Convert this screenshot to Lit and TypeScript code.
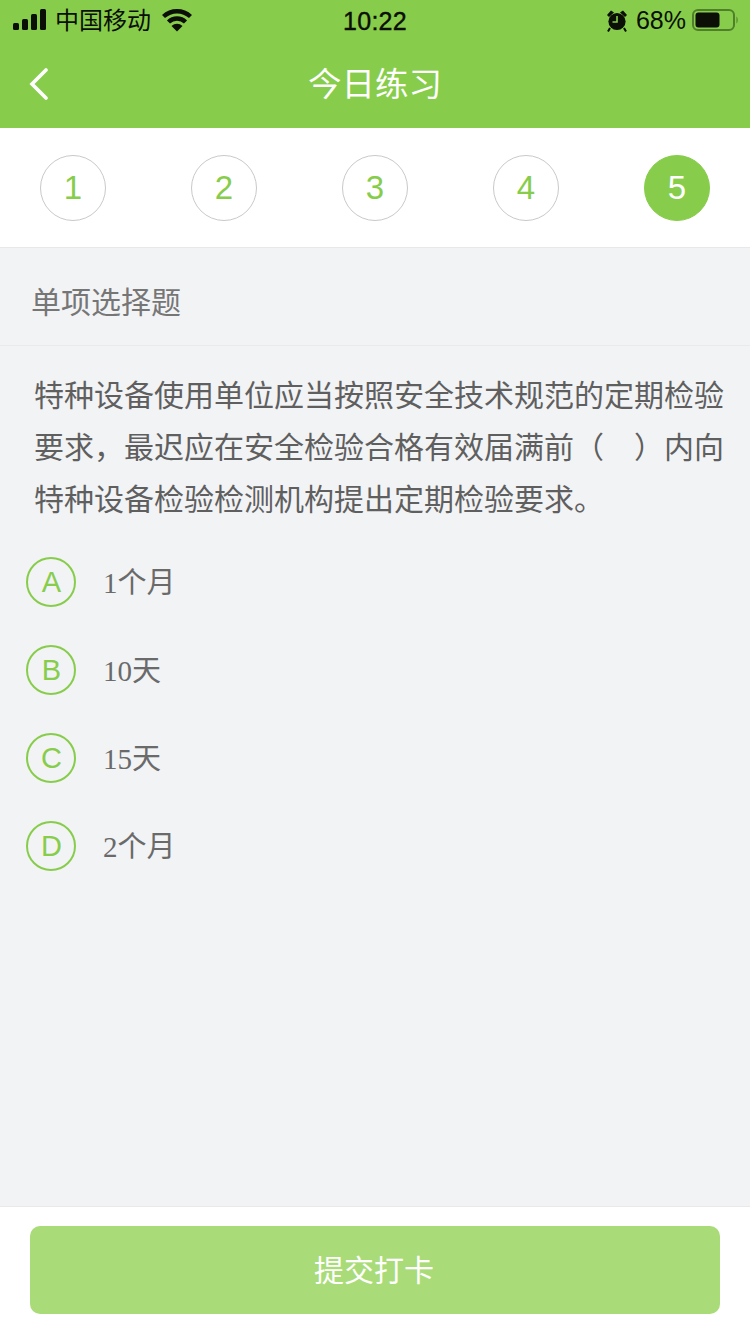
import { LitElement, html, css, svg } from 'lit';
import { customElement, state } from 'lit/decorators.js';

@customElement('app-root')
export class AppRoot extends LitElement {
  @state() private steps = [1, 2, 3, 4, 5];
  @state() private current = 5;
  @state() private options = [
    { key: 'A', text: '1个月' },
    { key: 'B', text: '10天' },
    { key: 'C', text: '15天' },
    { key: 'D', text: '2个月' },
  ];

  static styles = css`
    :host {
      display: flex;
      flex-direction: column;
      width: 750px;
      height: 1334px;
      background: #f2f3f5;
      font-family: "Liberation Sans", "Noto Sans CJK SC", sans-serif;
      overflow: hidden;
    }

    .head {
      background: #87cd4b;
      height: 128px;
      flex: none;
    }

    .status {
      height: 40px;
      display: grid;
      grid-template-columns: 1fr auto 1fr;
      align-items: center;
      color: #0b0f05;
      font-size: 24px;
    }

    .status-left {
      display: flex;
      align-items: center;
      padding-left: 13px;
    }

    .carrier {
      margin-left: 9px;
      margin-right: 11px;
      padding-bottom: 4px;
    }

    .clock {
      font-size: 25px;
      letter-spacing: 0.3px;
      padding-top: 2px;
      -webkit-text-stroke: 0.4px #0b0f05;
    }

    .status-right {
      display: flex;
      align-items: center;
      justify-content: flex-end;
      padding-right: 12px;
    }

    .battery-text {
      margin-left: 8px;
      margin-right: 6px;
      font-size: 25px;
      padding-top: 1px;
    }

    .nav {
      height: 88px;
      position: relative;
      display: flex;
      align-items: center;
      justify-content: center;
      color: #fff;
      font-size: 33.5px;
      margin-top: -3px;
    }

    .back {
      position: absolute;
      left: 28px;
      top: 31px;
    }

    .steps {
      flex: none;
      height: 120px;
      box-sizing: border-box;
      background: #fff;
      border-bottom: 1px solid #e8e8e8;
      padding: 1px 40px 0;
      display: flex;
      align-items: center;
      justify-content: space-between;
    }

    .step {
      width: 66px;
      height: 66px;
      box-sizing: border-box;
      border-radius: 50%;
      border: 1px solid #c9c9c9;
      display: flex;
      align-items: center;
      justify-content: center;
      color: #87cd4b;
      font-size: 33px;
    }

    .step.on {
      background: #87cd4b;
      border-color: #87cd4b;
      color: #fff;
    }

    .type {
      flex: none;
      height: 98px;
      box-sizing: border-box;
      border-bottom: 1px solid #e9eaec;
      padding: 6px 0 0 31px;
      display: flex;
      align-items: center;
      font-size: 30px;
      color: #767676;
    }

    .question {
      padding: 24px 24px 0 34px;
      font-size: 30px;
      line-height: 52px;
      color: #5f5f5f;
    }

    .options {
      flex: 1;
      padding: 12px 0 0 26px;
    }

    .option {
      height: 88px;
      display: flex;
      align-items: center;
    }

    .badge {
      width: 50px;
      height: 50px;
      box-sizing: border-box;
      border-radius: 50%;
      border: 2px solid #87cd4b;
      display: flex;
      align-items: center;
      justify-content: center;
      color: #87cd4b;
      font-size: 29px;
      padding-left: 1px;
      flex: none;
    }

    .option-text {
      margin-left: 27px;
      padding-bottom: 5px;
      font-family: "Liberation Serif", "Noto Sans CJK SC", serif;
      font-size: 29px;
      color: #6a6a6a;
    }

    .foot {
      flex: none;
      height: 128px;
      box-sizing: border-box;
      background: #fff;
      border-top: 1px solid #e9e9e9;
      padding: 19px 30px 0;
    }

    .submit {
      width: 690px;
      height: 88px;
      border: 0;
      border-radius: 10px;
      background: #a9dc78;
      color: #fff;
      font-family: inherit;
      font-size: 30px;
      padding: 0 2px 4px 0;
    }
  `;

  private signalIcon() {
    return svg`<svg width="33" height="22" viewBox="0 0 33 22">
      <rect x="0" y="14" width="6" height="7" rx="1.5" fill="#0b0f05"/>
      <rect x="9" y="10" width="6" height="11" rx="1.5" fill="#0b0f05"/>
      <rect x="18" y="5" width="6" height="16" rx="1.5" fill="#0b0f05"/>
      <rect x="27" y="0" width="6" height="21" rx="1.5" fill="#0b0f05"/>
    </svg>`;
  }

  private wifiIcon() {
    return svg`<svg width="30" height="23" viewBox="0 0 30 23" fill="none" stroke="#0b0f05" stroke-width="4.4">
      <path d="M1.5 7.5 A20 20 0 0 1 28.5 7.5"/>
      <path d="M6.5 13 A12 12 0 0 1 23.5 13"/>
      <path d="M9.5 17 L15 22.5 L20.5 17 A8 8 0 0 0 9.5 17 Z" fill="#0b0f05" stroke="none"/>
    </svg>`;
  }

  private alarmIcon() {
    return svg`<svg width="22" height="23" viewBox="0 0 22 23">
      <circle cx="11" cy="12.5" r="8.6" fill="#0b0f05"/>
      <path d="M1 6 L5 1.5 L8 3.5 L3 8 Z M21 6 L17 1.5 L14 3.5 L19 8 Z" fill="#0b0f05"/>
      <path d="M4 19 L2 22.5 M18 19 L20 22.5" stroke="#0b0f05" stroke-width="2"/>
      <path d="M11 7 V13 H6.5" fill="none" stroke="#87cd4b" stroke-width="1.6"/>
    </svg>`;
  }

  private batteryIcon() {
    return svg`<svg width="46" height="22" viewBox="0 0 46 22">
      <rect x="1" y="1" width="41" height="20" rx="5" fill="none" stroke="#4f7f2a" stroke-width="2"/>
      <rect x="3.5" y="3.5" width="24" height="15" rx="3" fill="#0b0f05"/>
      <path d="M44.5 7.5 C46 8.5 46 13.5 44.5 14.5 Z" fill="#4f7f2a"/>
    </svg>`;
  }

  render() {
    return html`
      <div class="head">
        <div class="status">
          <div class="status-left">
            ${this.signalIcon()}
            <span class="carrier">中国移动</span>
            ${this.wifiIcon()}
          </div>
          <div class="clock">10:22</div>
          <div class="status-right">
            ${this.alarmIcon()}
            <span class="battery-text">68%</span>
            ${this.batteryIcon()}
          </div>
        </div>
        <div class="nav">
          <svg class="back" width="20" height="32" viewBox="0 0 20 32" fill="none" stroke="#fff" stroke-width="3.6" stroke-linecap="round" stroke-linejoin="miter">
            <path d="M18 2 L4 16 L18 30"/>
          </svg>
          今日练习
        </div>
      </div>

      <div class="steps">
        ${this.steps.map(
          (n) => html`<div class="step ${n === this.current ? 'on' : ''}">${n}</div>`
        )}
      </div>

      <div class="type">单项选择题</div>

      <div class="question">
        特种设备使用单位应当按照安全技术规范的定期检验要求，最迟应在安全检验合格有效届满前（　）内向特种设备检验检测机构提出定期检验要求。
      </div>

      <div class="options">
        ${this.options.map(
          (o) => html`
            <div class="option">
              <div class="badge">${o.key}</div>
              <div class="option-text">${o.text}</div>
            </div>
          `
        )}
      </div>

      <div class="foot">
        <button class="submit">提交打卡</button>
      </div>
    `;
  }
}
